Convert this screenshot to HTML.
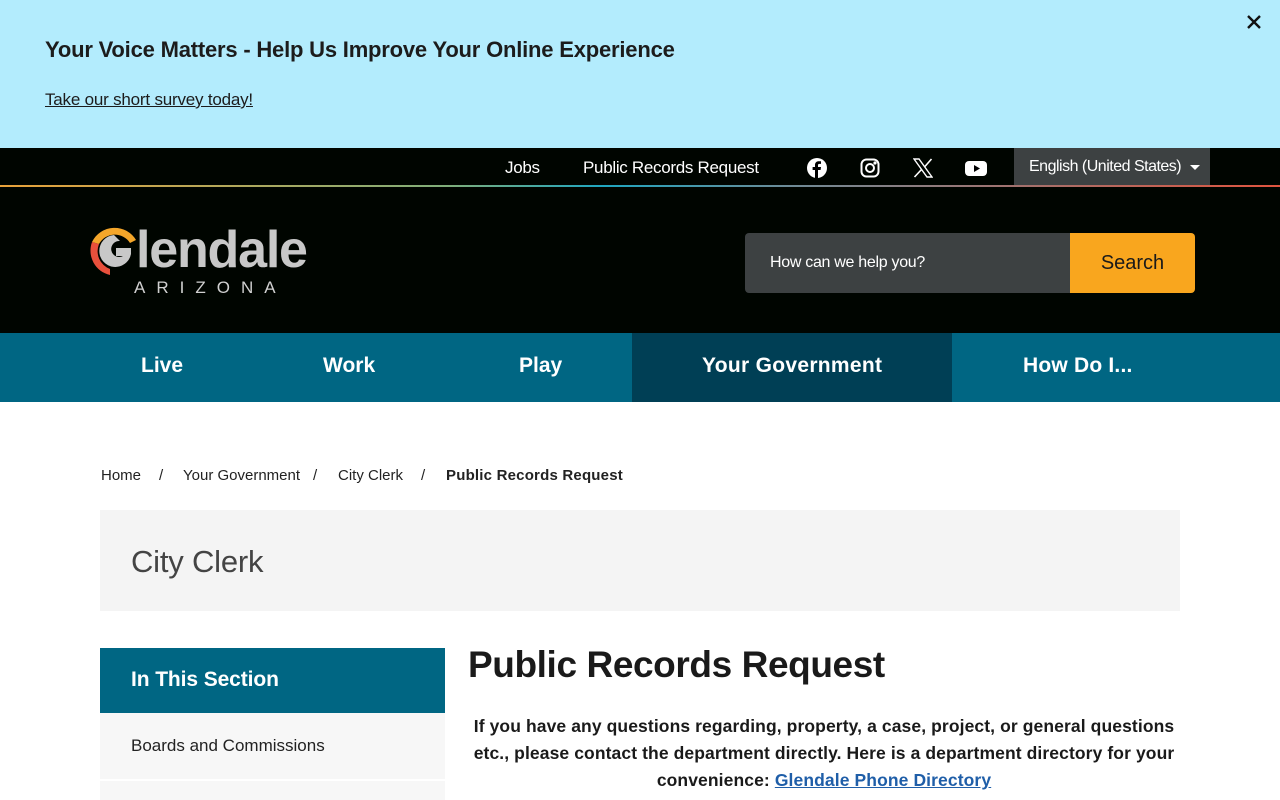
<!DOCTYPE html>
<html><head><meta charset="utf-8"><style>
*{box-sizing:border-box;margin:0;padding:0}
body{width:1280px;height:800px;overflow:hidden;background:#fff;font-family:"Liberation Sans",sans-serif;color:#1a1a1a;position:relative}
.ab{position:absolute;white-space:nowrap}
a{color:inherit}
.bc{position:absolute;top:467px;font-size:15px;color:#222;white-space:nowrap}
</style></head><body>
<div class="ab" style="left:0;top:0;width:1280px;height:148px;background:#b3ecfd"></div>
<div class="ab" style="left:45px;top:37px;font-size:22px;font-weight:bold;letter-spacing:-0.2px;color:#1c1c1c">Your Voice Matters - Help Us Improve Your Online Experience</div>
<div class="ab" style="left:45px;top:90px;font-size:17px;text-decoration:underline;color:#1c1c1c;letter-spacing:-0.2px">Take our short survey today!</div>
<svg class="ab" style="left:1246px;top:14px" width="16" height="16" viewBox="0 0 16 16"><path d="M2 2L14 14M14 2L2 14" stroke="#111" stroke-width="2.4"/></svg>

<div class="ab" style="left:0;top:148px;width:1280px;height:185px;background:#000500"></div>
<div class="ab" style="left:0;top:185px;width:1280px;height:2px;background:linear-gradient(90deg,#e8a23a 0%,#7fae7a 35%,#1fa6c0 47%,#6f8a95 62%,#e0553f 100%)"></div>
<div class="ab" style="left:505px;top:158px;font-size:17px;color:#fff;letter-spacing:-0.3px">Jobs</div>
<div class="ab" style="left:583px;top:158px;font-size:17px;color:#fff;letter-spacing:-0.3px">Public Records Request</div>
<svg class="ab" style="left:807px;top:158px" width="20" height="20" viewBox="0 0 20 20"><circle cx="10" cy="10" r="10" fill="#fff"/><path d="M11 20V12h2.6l.4-3H11V7.3c0-.9.3-1.4 1.5-1.4H14V3.3c-.3 0-1.2-.1-2.2-.1C9.6 3.2 8 4.5 8 7v2H5.6v3H8v8z" fill="#000"/></svg>
<svg class="ab" style="left:860px;top:158px" width="20" height="20" viewBox="0 0 20 20" fill="none" stroke="#fff" stroke-width="2"><rect x="1.5" y="1.5" width="17" height="17" rx="5"/><circle cx="10" cy="10" r="4"/><circle cx="15" cy="5" r=".6" fill="#fff"/></svg>
<svg class="ab" style="left:913px;top:158px" width="20" height="20" viewBox="0 0 20 20"><path d="M1 1h5l13 18h-5z" fill="none" stroke="#fff" stroke-width="1.4"/><path d="M18.5 1L11.5 9M8.5 11.5L1.5 19" stroke="#fff" stroke-width="1.6"/></svg>
<svg class="ab" style="left:965px;top:159px" width="22" height="18" viewBox="0 0 22 18"><rect x="0" y="2" width="22" height="15" rx="4" fill="#fff"/><path d="M9 6v7l6-3.5z" fill="#000"/></svg>
<div class="ab" style="left:1014px;top:148px;width:196px;height:37px;background:#3d4142"></div>
<div class="ab" style="left:1029px;top:158px;font-size:16px;color:#fff;letter-spacing:-0.5px">English (United States)</div>
<svg class="ab" style="left:1190px;top:165px" width="10" height="6"><path d="M0 0h10L5 5z" fill="#fff"/></svg>

<svg class="ab" style="left:86px;top:224px" width="56" height="54" viewBox="0 0 56 54">
<path d="M50 16A25 25 0 0 0 6 18L13 20A18 18 0 0 1 44 19z" fill="#f4a62a"/>
<path d="M6 18A25 25 0 0 0 24 51L24 45A19 19 0 0 1 13 20z" fill="#e8503c"/>
<path d="M28 11A16 16 0 1 0 45 30L45 24H30V32H37A8 8 0 1 1 34 17Z" fill="#c8c8c8"/>
</svg>
<div class="ab" style="left:136px;top:220px;font-size:52px;font-weight:bold;color:#c8c8c8;letter-spacing:-1.2px">lendale</div>
<div class="ab" style="left:134px;top:278px;font-size:17px;color:#d0d0d0;letter-spacing:11px">ARIZONA</div>

<div class="ab" style="left:745px;top:233px;width:325px;height:60px;background:#3d4142;border-radius:4px 0 0 4px"></div>
<div class="ab" style="left:770px;top:254px;font-size:16px;color:#fff;letter-spacing:-0.3px">How can we help you?</div>
<div class="ab" style="left:1070px;top:233px;width:125px;height:60px;background:#f9a61e;border-radius:0 4px 4px 0;font-size:20px;color:#1a1a1a;text-align:center;line-height:60px">Search</div>

<div class="ab" style="left:0;top:333px;width:1280px;height:69px;background:#006683"></div>
<div class="ab" style="left:632px;top:333px;width:320px;height:69px;background:#003f55"></div>
<div class="ab" style="left:141px;top:354px;font-size:21px;font-weight:bold;color:#fff">Live</div>
<div class="ab" style="left:323px;top:354px;font-size:21px;font-weight:bold;color:#fff">Work</div>
<div class="ab" style="left:519px;top:354px;font-size:21px;font-weight:bold;color:#fff">Play</div>
<div class="ab" style="left:702px;top:354px;font-size:21px;font-weight:bold;color:#fff;letter-spacing:0.3px">Your Government</div>
<div class="ab" style="left:1023px;top:354px;font-size:21px;font-weight:bold;color:#fff;letter-spacing:0.2px">How Do I...</div>

<div class="bc" style="left:101px">Home</div>
<div class="bc" style="left:159px">/</div>
<div class="bc" style="left:183px">Your Government</div>
<div class="bc" style="left:313px">/</div>
<div class="bc" style="left:338px">City Clerk</div>
<div class="bc" style="left:421px">/</div>
<div class="bc" style="left:446px;font-weight:bold;letter-spacing:0.2px">Public Records Request</div>

<div class="ab" style="left:100px;top:510px;width:1080px;height:101px;background:#f4f4f4"></div>
<div class="ab" style="left:131px;top:544px;font-size:31px;color:#444;letter-spacing:-0.2px">City Clerk</div>

<div class="ab" style="left:100px;top:648px;width:345px;height:65px;background:#006683"></div>
<div class="ab" style="left:131px;top:668px;font-size:21px;font-weight:bold;color:#fff;letter-spacing:-0.1px">In This Section</div>
<div class="ab" style="left:100px;top:713px;width:345px;height:66px;background:#f7f7f7"></div>
<div class="ab" style="left:131px;top:736px;font-size:17px;color:#222">Boards and Commissions</div>
<div class="ab" style="left:100px;top:781px;width:345px;height:19px;background:#f7f7f7"></div>

<div class="ab" style="left:468px;top:644px;font-size:37px;font-weight:bold;color:#1a1a1a;letter-spacing:-0.4px">Public Records Request</div>
<div class="ab" style="left:424px;top:713px;width:800px;text-align:center;font-size:17.5px;font-weight:bold;line-height:27px;color:#1a1a1a;letter-spacing:0.1px">If you have any questions regarding, property, a case, project, or general questions<br>etc., please contact the department directly. Here is a department directory for your<br>convenience: <a style="color:#1f5ea8;text-decoration:underline">Glendale Phone Directory</a></div>
</body></html>
